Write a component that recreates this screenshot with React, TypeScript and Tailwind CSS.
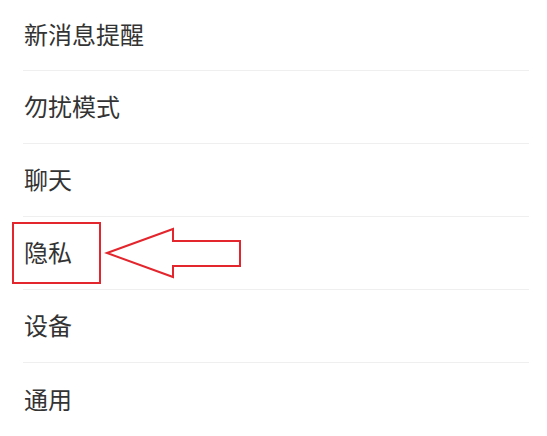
import React from 'react'

const items = ['新消息提醒', '勿扰模式', '聊天', '隐私', '设备', '通用']

const App: React.FC = () => {
  return (
    <div
      className="relative w-[547px] h-[436px] overflow-hidden bg-white"
      style={{ fontFamily: '"Noto Sans", "Noto Sans CJK SC", sans-serif' }}
    >
      <ul className="pl-[23px] pr-[18px]">
        {items.map((label, i) => (
          <li
            key={label}
            className={`flex items-center pl-px text-[24px] text-[#333] ${
              i === 0 ? 'h-[71px]' : 'h-[73px]'
            } ${i < items.length - 1 ? 'border-b border-[#efefef]' : ''}`}
          >
            {label}
          </li>
        ))}
      </ul>

      {/* red highlight box */}
      <div className="absolute left-[12px] top-[222px] w-[89px] h-[62px] border-2 border-[#e3262d]" />

      {/* arrow pointing left */}
      <svg className="absolute left-0 top-0" width="547" height="436" viewBox="0 0 547 436">
        <polygon
          points="107,253 173,229 173,241 240,241 240,266 173,266 173,277"
          fill="none"
          stroke="#e3262d"
          strokeWidth="2"
          strokeLinejoin="miter"
        />
      </svg>
    </div>
  )
}

export default App
